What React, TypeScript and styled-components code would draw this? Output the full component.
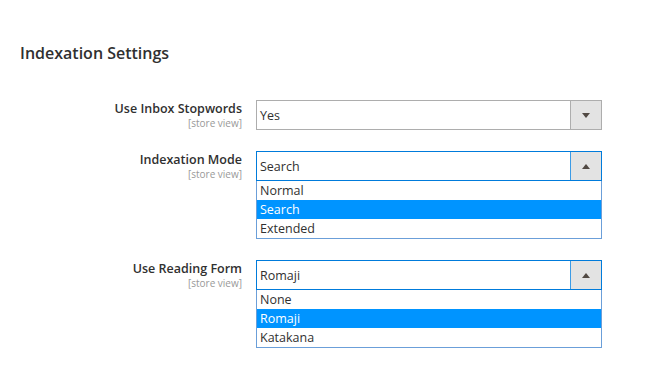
import React from "react";
import styled, { createGlobalStyle } from "styled-components";

const GlobalStyle = createGlobalStyle`
  html, body {
    margin: 0;
    padding: 0;
    background: #ffffff;
    font-family: "Open Sans", "Noto Sans", sans-serif;
    color: #303030;
  }
`;

const Page = styled.div`
  padding: 43px 0 0 20px;
`;

const Heading = styled.h2`
  margin: 0 0 37px;
  font-size: 16px;
  font-weight: 600;
  line-height: 20px;
  color: #303030;
`;

const Row = styled.div`
  display: flex;
  align-items: flex-start;
  gap: 14px;
  margin-bottom: 21px;
`;

const Label = styled.div`
  width: 222px;
  text-align: right;
  padding-top: 1px;
`;

const LabelText = styled.div`
  font-size: 12.5px;
  font-weight: 600;
  line-height: 15px;
  color: #303030;
`;

const Scope = styled.div`
  margin-top: 2px;
  font-size: 10px;
  line-height: 11px;
  color: #999999;
`;

const Control = styled.div`
  width: 346px;
`;

const Box = styled.div<{ $open?: boolean }>`
  display: flex;
  height: 30px;
  box-sizing: border-box;
  border: 1px solid ${(p) => (p.$open ? "#007bdb" : "#adadad")};
  background: #ffffff;
`;

const Value = styled.div`
  flex: 1;
  display: flex;
  align-items: center;
  padding-left: 3px;
  font-size: 12.5px;
  color: #303030;
`;

const ArrowButton = styled.div<{ $open?: boolean }>`
  width: 30px;
  display: flex;
  align-items: center;
  justify-content: center;
  background: #e3e3e3;
  border-left: 1px solid ${(p) => (p.$open ? "#3b9be6" : "#adadad")};
`;

const Arrow = styled.span<{ $up?: boolean }>`
  width: 0;
  height: 0;
  border-left: 4px solid transparent;
  border-right: 4px solid transparent;
  ${(p) =>
    p.$up
      ? "border-bottom: 5px solid #514943;"
      : "border-top: 5px solid #514943;"}
`;

const List = styled.div`
  border: 1px solid #6b9fd9;
  border-top: none;
  background: #ffffff;
`;

const Option = styled.div<{ $selected?: boolean }>`
  height: 19px;
  line-height: 19px;
  padding-left: 3px;
  font-size: 12.5px;
  color: ${(p) => (p.$selected ? "#ffffff" : "#303030")};
  background: ${(p) => (p.$selected ? "#0094ff" : "transparent")};
`;

type SelectProps = {
  value: string;
  options?: string[];
  open?: boolean;
};

function Select({ value, options = [], open = false }: SelectProps) {
  return (
    <Control>
      <Box $open={open}>
        <Value>{value}</Value>
        <ArrowButton $open={open}>
          <Arrow $up={open} />
        </ArrowButton>
      </Box>
      {open && (
        <List>
          {options.map((o) => (
            <Option key={o} $selected={o === value}>
              {o}
            </Option>
          ))}
        </List>
      )}
    </Control>
  );
}

const fields = [
  { label: "Use Inbox Stopwords", value: "Yes", open: false, options: [] },
  {
    label: "Indexation Mode",
    value: "Search",
    open: true,
    options: ["Normal", "Search", "Extended"],
  },
  {
    label: "Use Reading Form",
    value: "Romaji",
    open: true,
    options: ["None", "Romaji", "Katakana"],
  },
];

export default function App() {
  return (
    <>
      <GlobalStyle />
      <Page>
        <Heading>Indexation Settings</Heading>
        {fields.map((f) => (
          <Row key={f.label}>
            <Label>
              <LabelText>{f.label}</LabelText>
              <Scope>[store view]</Scope>
            </Label>
            <Select value={f.value} open={f.open} options={f.options} />
          </Row>
        ))}
      </Page>
    </>
  );
}
